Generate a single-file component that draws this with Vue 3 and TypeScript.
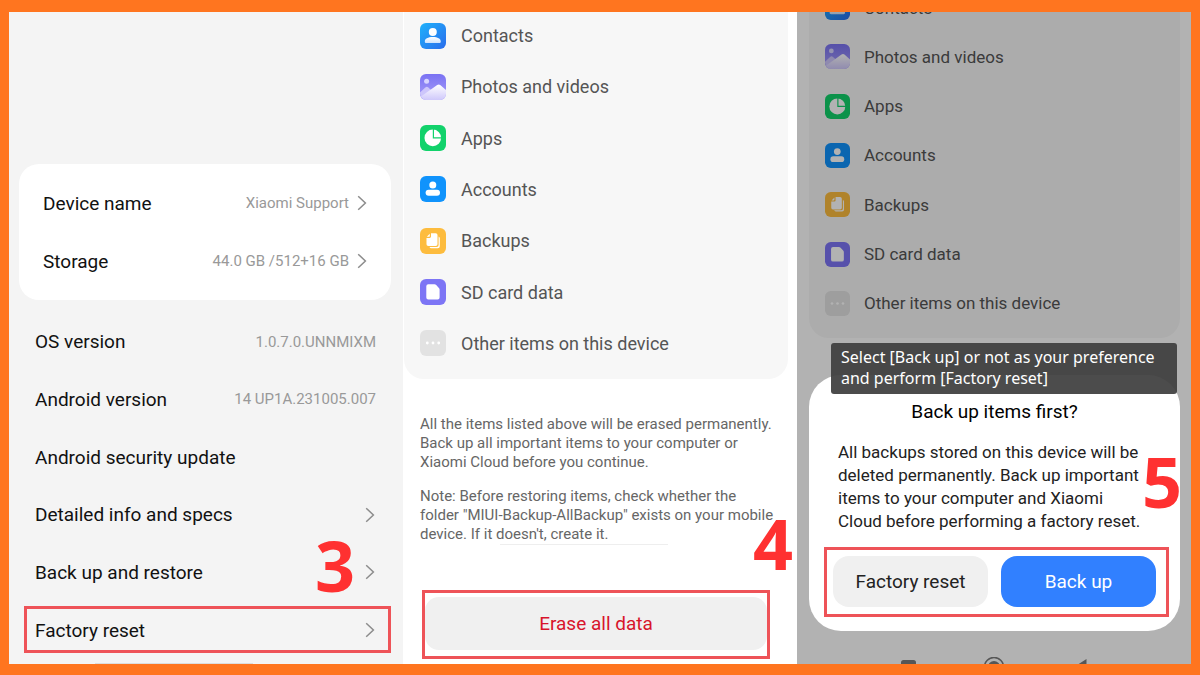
<script setup lang="ts">
interface InfoRow {
  label: string
  value?: string
  link?: boolean
  marked?: boolean
}
interface EraseItem {
  icon: string
  label: string
}

const cardRows: InfoRow[] = [
  { label: 'Device name', value: 'Xiaomi Support', link: true },
  { label: 'Storage', value: '44.0 GB /512+16 GB', link: true },
]
const listRows: InfoRow[] = [
  { label: 'OS version', value: '1.0.7.0.UNNMIXM' },
  { label: 'Android version', value: '14 UP1A.231005.007' },
  { label: 'Android security update' },
  { label: 'Detailed info and specs', link: true },
  { label: 'Back up and restore', link: true },
  { label: 'Factory reset', link: true, marked: true },
]
const items: EraseItem[] = [
  { icon: 'contacts', label: 'Contacts' },
  { icon: 'photos', label: 'Photos and videos' },
  { icon: 'apps', label: 'Apps' },
  { icon: 'accounts', label: 'Accounts' },
  { icon: 'backups', label: 'Backups' },
  { icon: 'sdcard', label: 'SD card data' },
  { icon: 'other', label: 'Other items on this device' },
]
</script>

<template>
  <svg class="defs" width="0" height="0" aria-hidden="true">
    <linearGradient id="g-contacts" x1="0" y1="0" x2="1" y2="1">
      <stop offset="0" stop-color="#1fb2fb" />
      <stop offset="1" stop-color="#2a6cec" />
    </linearGradient>
    <linearGradient id="g-body" x1="0" y1="0" x2="0" y2="1">
      <stop offset="0" stop-color="#fff" />
      <stop offset="1" stop-color="#cfe3fd" />
    </linearGradient>
    <linearGradient id="g-photos" x1="0" y1="0" x2="0" y2="1">
      <stop offset="0" stop-color="#7a72f3" />
      <stop offset="1" stop-color="#a99ff8" />
    </linearGradient>
    <linearGradient id="g-hill" x1="0" y1="0" x2="0" y2="1">
      <stop offset="0" stop-color="#fff" />
      <stop offset="1" stop-color="#cfc8fb" />
    </linearGradient>
    <symbol id="i-contacts" viewBox="0 0 26 26">
      <rect width="26" height="26" rx="6" fill="url(#g-contacts)" />
      <circle cx="12.8" cy="9" r="4" fill="#fff" />
      <path d="M4.8 18.4c0-2.8 3.2-4.4 8-4.4s8 1.6 8 4.4c0 1-.6 1.5-1.5 1.5h-13c-.9 0-1.5-.5-1.5-1.5z" fill="url(#g-body)" />
    </symbol>
    <symbol id="i-photos" viewBox="0 0 26 26">
      <rect width="26" height="26" rx="6" fill="url(#g-photos)" />
      <circle cx="6.6" cy="7.2" r="2.5" fill="#d6d4fe" />
      <path d="M0 18.500l5.300-5q1.500-1.300 3 0l5 4.500-5 7H6a6 6 0 0 1-6-6z" fill="#cdc6fb" />
      <path d="M1 22.500L17.200 11q1.600-1 3 0l5.800 5V20a6 6 0 0 1-6 6H6q-3.300 0-5-3.500z" fill="url(#g-hill)" />
    </symbol>
    <symbol id="i-apps" viewBox="0 0 26 26">
      <rect width="26" height="26" rx="6" fill="#12d26b" />
      <circle cx="12.8" cy="12.9" r="8.3" fill="#fff" />
      <path d="M13.400 4v8.800H22" fill="none" stroke="#12d26b" stroke-width="1.2" />
    </symbol>
    <symbol id="i-accounts" viewBox="0 0 26 26">
      <rect width="26" height="26" rx="6" fill="#1093fc" />
      <circle cx="12.8" cy="8.9" r="3.5" fill="#fff" />
      <rect x="5.6" y="13.8" width="14.4" height="6" rx="3" fill="#fff" />
    </symbol>
    <symbol id="i-backups" viewBox="0 0 26 26">
      <rect width="26" height="26" rx="6" fill="#fdbc3e" />
      <path d="M18.600 8.400a1.800 1.800 0 0 1 1.200 1.700v8.200a2 2 0 0 1-2 2h-6.600a1.800 1.800 0 0 1-1.700-1.200h7.100a2 2 0 0 0 2-2z" fill="#fff" />
      <path d="M11 5.200h4.700a1.800 1.800 0 0 1 1.800 1.800v9.300a1.800 1.800 0 0 1-1.800 1.800H8.300a1.800 1.800 0 0 1-1.800-1.800V9.900h3.200A1.300 1.300 0 0 0 11 8.600z" fill="#fff" />
      <path d="M9.800 5.700v2.200a.9.9 0 0 1-.9.900H6.800z" fill="#fff" />
    </symbol>
    <symbol id="i-sdcard" viewBox="0 0 26 26">
      <rect width="26" height="26" rx="6" fill="#7d75f5" />
      <path d="M8.300 5.300h6.200q1 0 1.700.7l2.700 2.900q.7.700.7 1.700v7.800a2 2 0 0 1-2 2H8.300a2 2 0 0 1-2-2V7.300a2 2 0 0 1 2-2z" fill="#fff" />
    </symbol>
    <symbol id="i-other" viewBox="0 0 26 26">
      <rect width="26" height="26" rx="6" fill="#e2e2e2" />
      <circle cx="7.3" cy="13" r="1.400" fill="#fff" />
      <circle cx="13" cy="13" r="1.400" fill="#fff" />
      <circle cx="18.7" cy="13" r="1.400" fill="#fff" />
    </symbol>
    <symbol id="i-chevron" viewBox="0 0 10 16">
      <path d="M1.200 1.200L8.400 8l-7.200 6.800" fill="none" stroke="#8c8c8c" stroke-width="1.5" />
    </symbol>
  </svg>

  <main class="board">
    <section class="panel about">
      <div class="card">
        <button v-for="row in cardRows" :key="row.label" type="button" class="row">
          <span class="label">{{ row.label }}</span>
          <span class="value">{{ row.value }}</span>
          <svg class="chevron"><use href="#i-chevron" /></svg>
        </button>
      </div>
      <div class="list">
        <component
          :is="row.link ? 'button' : 'div'"
          v-for="row in listRows"
          :key="row.label"
          :type="row.link ? 'button' : undefined"
          class="row"
          :class="{ marked: row.marked }"
        >
          <span class="label">{{ row.label }}</span>
          <span v-if="row.value" class="value">{{ row.value }}</span>
          <svg v-if="row.link" class="chevron"><use href="#i-chevron" /></svg>
        </component>
      </div>
      <span class="handle" />
      <span class="step step-3">3</span>
    </section>

    <section class="panel erase">
      <div class="sheet">
        <ul class="items">
          <li v-for="item in items" :key="item.icon">
            <svg class="tile"><use :href="'#i-' + item.icon" /></svg>
            <span>{{ item.label }}</span>
          </li>
        </ul>
      </div>
      <div class="notes">
        <p>All the items listed above will be erased permanently.<br />Back up all important items to your computer or<br />Xiaomi Cloud before you continue.</p>
        <p>Note: Before restoring items, check whether the<br />folder "MIUI-Backup-AllBackup" exists on your mobile<br />device. If it doesn't, create it.</p>
      </div>
      <hr class="rule" />
      <div class="frame erase-frame">
        <button type="button" class="erase-button">Erase all data</button>
      </div>
      <span class="step step-4">4</span>
    </section>

    <section class="panel confirm">
      <div class="sheet">
        <ul class="items">
          <li v-for="item in items" :key="item.icon">
            <svg class="tile"><use :href="'#i-' + item.icon" /></svg>
            <span>{{ item.label }}</span>
          </li>
        </ul>
      </div>
      <svg class="navbar" viewBox="0 0 190 7" aria-hidden="true">
        <rect x="1" y="3" width="15" height="15" rx="2.5" fill="#7c7c7c" />
        <circle cx="94" cy="10" r="9.5" fill="none" stroke="#7c7c7c" stroke-width="1.6" />
        <circle cx="94" cy="10" r="6" fill="#7c7c7c" />
        <path d="M186.500 2v16L174 10z" fill="#7c7c7c" />
      </svg>
      <div class="scrim" />
      <div class="dialog" role="dialog" aria-labelledby="dialog-title">
        <h2 id="dialog-title">Back up items first?</h2>
        <p>All backups stored on this device will be<br />deleted permanently. Back up important<br />items to your computer and Xiaomi<br />Cloud before performing a factory reset.</p>
        <div class="frame actions">
          <button type="button" class="secondary">Factory reset</button>
          <button type="button" class="primary">Back up</button>
        </div>
      </div>
      <div class="tooltip" role="note">Select [Back up] or not as your preference<br />and perform [Factory reset]</div>
      <span class="step step-5">5</span>
    </section>
  </main>
</template>

<style>
body {
  margin: 0;
}
</style>

<style scoped>
.defs {
  position: absolute;
}
.board {
  box-sizing: border-box;
  min-height: 100vh;
  padding: 12px 9px 11px;
  display: grid;
  grid-template-columns: 394fr 392fr 394fr;
  gap: 1px;
  background: linear-gradient(#fff, #fff) content-box, #ff751f;
  font-family: Roboto, "Noto Sans", sans-serif;
}
.panel {
  position: relative;
  overflow: hidden;
  display: flex;
  flex-direction: column;
}
button {
  margin: 0;
  padding: 0;
  border: 0;
  background: none;
  font: inherit;
  color: inherit;
  cursor: pointer;
}
.frame {
  border: 3px solid #ee5358;
}
.step {
  position: absolute;
  font: 700 70px/70px "Open Sans", "Noto Sans", sans-serif;
  color: #ff3131;
}

.about {
  background: #f4f4f4;
  padding: 152px 12px 5px 10px;
}
.card {
  background: #fff;
  border-radius: 20px;
  padding: 10px 24px;
}
.row {
  position: relative;
  width: 100%;
  min-height: 58px;
  display: flex;
  align-items: center;
  text-align: left;
}
.label {
  flex: 1;
  font-size: 19px;
  color: #111;
}
.value {
  font-size: 15px;
  color: #999;
}
.chevron {
  width: 10px;
  height: 16px;
  margin-left: 8px;
}
.list {
  flex: 1;
  margin-top: 13px;
  padding: 0 15px 0 16px;
  display: grid;
  grid-auto-rows: 1fr;
}
.list .row {
  min-height: 48px;
}
.list .chevron {
  margin-right: 1px;
}
.marked::after {
  content: "";
  position: absolute;
  inset: 5px -15px 6px -11px;
  border: 3px solid #ee5358;
}
.handle {
  position: absolute;
  left: 86px;
  bottom: 0;
  width: 158px;
  height: 1px;
  background: #ddd;
}
.step-3 {
  right: 48px;
  bottom: 64px;
}

.sheet {
  background: #f7f7f7;
  border-radius: 0 0 20px 20px;
  display: flex;
  padding-bottom: 10px;
}
.items {
  flex: 1;
  list-style: none;
  margin: 0;
  padding: 0 16px;
  display: grid;
  grid-auto-rows: 1fr;
  color: #555;
  font-size: 18px;
}
.items li {
  display: flex;
  align-items: center;
  gap: 15px;
}
.tile {
  width: 26px;
  height: 26px;
}
.erase {
  background: #fff;
}
.erase .sheet {
  margin-right: 8px;
}
.erase .items {
  min-height: 359px;
  margin-top: -2px;
}
.notes {
  margin: 36px 16px 0;
  font-size: 15px;
  line-height: 19px;
  color: #666;
}
.notes p {
  margin: 0 0 15px;
  white-space: nowrap;
}
.notes p:last-child {
  margin: 0;
}
.rule {
  width: 168px;
  height: 1px;
  margin: 0 0 0 96px;
  border: 0;
  background: #eee;
}
.erase-frame {
  margin: auto 26px 5px 18px;
  padding: 4px 0 6px;
}
.erase-button {
  width: 100%;
  height: 53px;
  border-radius: 14px;
  background: #f0f0f0;
  color: #d8142b;
  font-size: 19px;
  display: block;
}
.step-4 {
  right: 3px;
  bottom: 86px;
}

.confirm {
  background: #fff;
}
.confirm .sheet {
  margin: 0 11px 0 12px;
}
.confirm .items {
  min-height: 345px;
  margin-top: -29px;
  font-size: 17px;
}
.confirm .items li {
  gap: 14px;
}
.confirm .tile {
  width: 25px;
  height: 25px;
}
.navbar {
  position: absolute;
  left: 103px;
  bottom: 0;
  width: 190px;
  height: 7px;
}
.scrim {
  position: absolute;
  inset: 0;
  background: rgba(0, 0, 0, 0.3);
}
.dialog {
  position: absolute;
  left: 12px;
  right: 11px;
  bottom: 33px;
  box-sizing: border-box;
  padding: 25px 11px 14px 15px;
  border-radius: 32px;
  background: #fff;
  color: #222;
}
.dialog h2 {
  margin: 0 4px 0 0;
  text-align: center;
  font-size: 19px;
  line-height: 24px;
  font-weight: 400;
  color: #000;
}
.dialog p {
  margin: 17px 14px 14px;
  font-size: 17px;
  line-height: 23px;
  white-space: nowrap;
}
.actions {
  display: grid;
  grid-template-columns: 1fr 1fr;
  gap: 13px;
  padding: 6px 10px 7px 6px;
}
.actions button {
  height: 51px;
  border-radius: 16px;
  font-size: 19px;
}
.secondary {
  background: #f0f0f0;
}
.primary {
  background: #3180ff;
  color: #fff;
}
.tooltip {
  position: absolute;
  left: 34px;
  right: 14px;
  bottom: 270px;
  padding: 4px 10px 5px;
  border-radius: 3px;
  background: rgba(62, 62, 62, 0.93);
  color: #fff;
  font-family: "Noto Sans", sans-serif;
  font-size: 16px;
  line-height: 21px;
  white-space: nowrap;
}
.step-5 {
  right: 9px;
  bottom: 148px;
}
</style>
